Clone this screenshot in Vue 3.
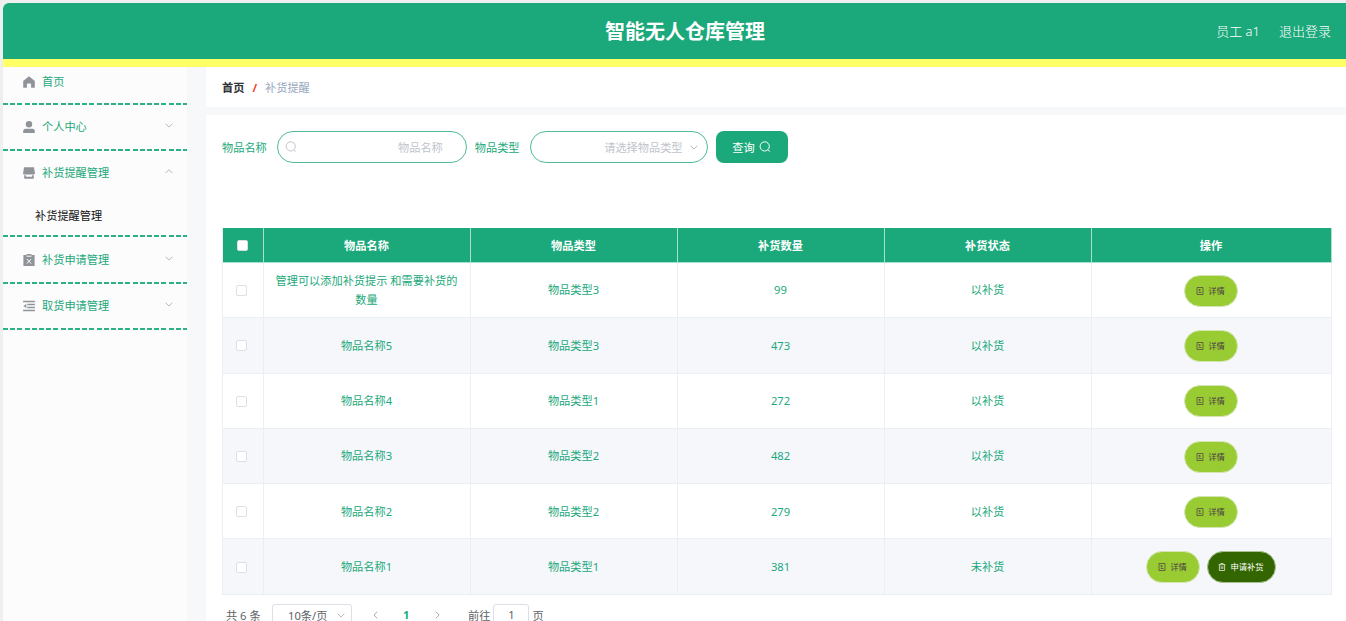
<script setup>
const menus = [
  { label: '首页', icon: 'home', first: true },
  { label: '个人中心', icon: 'user', arrow: 'down' },
  { label: '补货提醒管理', icon: 'shop', arrow: 'up', child: '补货提醒管理' },
  { label: '补货申请管理', icon: 'clip', arrow: 'down' },
  { label: '取货申请管理', icon: 'list', arrow: 'down' },
]
const heads = ['物品名称', '物品类型', '补货数量', '补货状态', '操作']
const rows = [
  { name: '管理可以添加补货提示 和需要补货的数量', type: '物品类型3', count: 99, state: '以补货' },
  { name: '物品名称5', type: '物品类型3', count: 473, state: '以补货' },
  { name: '物品名称4', type: '物品类型1', count: 272, state: '以补货' },
  { name: '物品名称3', type: '物品类型2', count: 482, state: '以补货' },
  { name: '物品名称2', type: '物品类型2', count: 279, state: '以补货' },
  { name: '物品名称1', type: '物品类型1', count: 381, state: '未补货', apply: true },
]
</script>

<template>
  <div class="page">
    <header class="header">
      <h1 class="title">智能无人仓库管理</h1>
      <div class="account"><span>员工 a1</span><span>退出登录</span></div>
    </header>
    <div class="body">
      <aside class="sidebar">
        <div v-for="m in menus" :key="m.label" class="group" :class="{ first: m.first }">
          <div class="item">
            <svg class="icon" viewBox="0 0 12 12">
              <path v-if="m.icon === 'home'" d="M6 .3 11.800 5v6.200q0 .6-.6.6H8.100V8.200q0-.7-.7-.7H4.600q-.7 0-.7.7v3.600H.8q-.6 0-.6-.6V5z" />
              <template v-else-if="m.icon === 'user'">
                <circle cx="6" cy="3.300" r="3.200" />
                <path d="M.2 12v-1.800Q.2 7.800 2.700 7.800h6.600q2.500 0 2.500 2.400V12z" />
              </template>
              <template v-else-if="m.icon === 'shop'">
                <path d="M1 .2h10l.9 6q0 1.300-1.500 1.300H1.600Q.1 7.500.1 6.200z" />
                <path d="M1.200 8.200h1.700v1.500h6.200V8.200h1.700v2.700q0 .9-.9.9H2.100q-.9 0-.9-.9z" />
              </template>
              <template v-else-if="m.icon === 'clip'">
                <path d="M.4 1.100h3.200V0h4.800v1.100h3.200V12H.4z" />
                <path class="cut" d="M3.500 2.200h5M3.900 5l4.200 4.600M8.100 5 3.900 9.600" />
              </template>
              <template v-else>
                <path class="bars" d="M.1 1.500h11.800M4.300 4.500h7.600M4.300 7.500h7.600M.1 10.500h11.800" />
                <path d="M.3 6 3.300 3.900v4.200z" />
              </template>
            </svg>
            <span>{{ m.label }}</span>
            <svg v-if="m.arrow" class="arrow" viewBox="0 0 8 5">
              <path :d="m.arrow === 'down' ? 'M.6.700 4 4.100 7.400.7' : 'M.6 4.100 4 .700 7.400 4.100'" />
            </svg>
          </div>
          <div v-if="m.child" class="child">{{ m.child }}</div>
        </div>
      </aside>
      <main class="main">
        <nav class="crumbs"><b>首页</b><b class="slash">/</b><span>补货提醒</span></nav>
        <section class="content">
          <div class="search">
            <label>物品名称</label>
            <div class="field name-field">
              <svg class="glass" viewBox="0 0 12 12"><circle cx="5.700" cy="5.400" r="4.600" /><path d="m8.900 8.700 2 2" /></svg>
              <span>物品名称</span>
            </div>
            <label>物品类型</label>
            <div class="field type-field">
              <span>请选择物品类型</span>
              <svg class="arrow" viewBox="0 0 8 5"><path d="M.6.700 4 4.100 7.400.7" /></svg>
            </div>
            <button class="query"><span>查询</span><svg class="glass" viewBox="0 0 12 12"><circle cx="5.700" cy="5.400" r="4.600" /><path d="m8.900 8.700 2 2" /></svg></button>
          </div>
          <table class="table">
            <colgroup><col class="c-check" /><col class="c-data" /><col class="c-data" /><col class="c-data" /><col class="c-data" /><col /></colgroup>
            <thead>
              <tr><th><i class="check"></i></th><th v-for="h in heads" :key="h">{{ h }}</th></tr>
            </thead>
            <tbody>
              <tr v-for="r in rows" :key="r.name">
                <td><i class="check"></i></td>
                <td>{{ r.name }}</td>
                <td>{{ r.type }}</td>
                <td>{{ r.count }}</td>
                <td>{{ r.state }}</td>
                <td>
                  <div class="ops">
                    <button class="btn">
                      <svg viewBox="0 0 8 8"><path d="M1 .5h6v7H1zM2.600 2.500h1.500v1.300H2.600M2.600 5.500h3" /></svg>详情
                    </button>
                    <button v-if="r.apply" class="btn dark">
                      <svg viewBox="0 0 8 8"><path d="M.6 1.700h6.800M2.800 1.500V.5h2.400v1M1.400 1.700v5.800h5.200V1.700M3.200 3.200V6M4.800 3.200V6" /></svg>申请补货
                    </button>
                  </div>
                </td>
              </tr>
            </tbody>
          </table>
          <div class="pager">
            <span class="total">共 6 条</span>
            <div class="size"><span>10条/页</span><svg class="arrow" viewBox="0 0 8 5"><path d="M.6.700 4 4.100 7.400.7" /></svg></div>
            <svg class="step" viewBox="0 0 5 8"><path d="M4.200.7.9 4l3.300 3.300" /></svg>
            <b class="current">1</b>
            <svg class="step" viewBox="0 0 5 8"><path d="M.8.700 4.100 4 .8 7.300" /></svg>
            <span class="goto">前往</span>
            <div class="jump">1</div>
            <span>页</span>
          </div>
        </section>
      </main>
    </div>
  </div>
</template>

<style>
body { margin: 0; overflow: hidden; background: #eeefef; }
</style>
<style scoped>
* { box-sizing: border-box; }
.page {
  height: 621px; padding: 3px 0 0 3px; overflow: hidden;
  font: 11.2px/18px "Noto Sans", "Noto Sans CJK SC", sans-serif; color: #1ba87a;
}
.header {
  height: 64px; display: grid; grid-template-columns: 1fr auto 1fr; align-items: center;
  background: #1ba87a; border-bottom: 8px solid #ff6; border-radius: 6px 0 0 0; color: #fff;
}
.title { grid-column: 2; margin: 2px 0 0 21px; font-size: 20px; line-height: 30px; font-weight: 700; }
.account { display: flex; justify-content: flex-end; gap: 19px; padding-right: 15px; font-size: 13px; font-weight: 300; }
.body { display: flex; height: 554px; background: #f7f8fa; }
.sidebar { width: 184px; margin-right: 19px; background: #fcfcfc; }
.group {
  padding-bottom: 2px;
  background: repeating-linear-gradient(90deg, #2eb087 0 5px, transparent 5px 7.200px) left bottom / 100% 2px no-repeat;
}
.item { height: 44.200px; display: flex; align-items: center; padding: 0 14px 0 20px; }
.item span { padding-top: 1px; }
.first .item { height: 35.500px; padding-bottom: 7px; }
.icon { width: 12px; height: 12px; margin: 1px 7px 0 0; fill: #909399; }
.cut { fill: none; stroke: #fcfcfc; stroke-width: 1; }
.bars { fill: none; stroke: #909399; stroke-width: 1.400; }
.arrow { width: 8px; height: 5px; margin-left: auto; fill: none; stroke: #b4b8c0; stroke-width: 1; }
.item .arrow { margin-top: -2px; }
.child { height: 40.500px; padding-left: 32px; line-height: 42px; color: #111; }
.main { flex: 1; min-width: 0; }
.crumbs { display: flex; align-items: center; height: 40px; margin-bottom: 8px; padding: 1px 0 0 16px; background: #fff; border-radius: 0 0 0 3px; color: #97a8be; }
.crumbs b { color: #303133; }
.crumbs .slash { margin: 0 8px; color: #f5402c; }
.content { height: 506px; padding: 16px 14px 0 16px; background: #fff; }
.search { display: flex; align-items: center; height: 32px; margin-bottom: 65px; }
.search label, .search span { padding-top: 1px; }
.field { display: flex; align-items: center; height: 32px; border: 1px solid #4fbc97; border-radius: 16px; color: #c0c4cc; }
.name-field { width: 190px; margin: 0 8px 0 10px; padding: 0 23px 0 7px; justify-content: space-between; }
.type-field { width: 178px; margin: 0 8px 0 10px; padding: 0 9px; justify-content: flex-end; }
.type-field .arrow { margin-left: 7px; }
.glass { width: 12px; height: 12px; fill: none; stroke: currentColor; stroke-width: 1; }
button { border: 0; font: inherit; }
.query { display: flex; align-items: center; justify-content: center; gap: 4px; width: 72px; height: 32px; padding: 0; background: #1ba87a; border-radius: 8px; color: #fff; }
.table { width: 1110px; table-layout: fixed; border-collapse: separate; border-spacing: 0; border-left: 1px solid #ebeef5; text-align: center; }
.c-check { width: 41px; }
.c-data { width: 207px; }
th { height: 35px; padding: 1px 1px 0 0; background: #1ba87a; border-right: 1px solid #a9dfcd; border-bottom: 1px solid #a9dfcd; color: #fff; }
td { height: 55.300px; padding: 1px 9px 0 8px; border-right: 1px solid #ebeef5; border-bottom: 1px solid #ebeef5; line-height: 18.600px; }
tbody tr:nth-child(even) { background: #f5f7fa; }
.check { display: block; width: 11px; height: 11px; margin: 0 auto; border: 1px solid #dcdfe6; border-radius: 2px; background: #fff; }
td .check { margin-left: 5px; }
.ops { display: flex; justify-content: center; gap: 7px; margin-left: -1px; }
.btn { display: flex; align-items: center; justify-content: center; gap: 4px; width: 54px; height: 32px; padding: 0; background: #9c3; border: 1px solid #d5e6b4; border-radius: 16px; color: #4c3b45; font-size: 8.300px; line-height: 12px; }
.btn svg { width: 8px; height: 8px; fill: none; stroke: currentColor; stroke-width: .7; }
.dark { width: 69px; background: #360; border-color: #a9c08f; color: #fff; }
.pager { display: flex; align-items: center; height: 23px; margin-top: 9px; color: #606266; }
.pager > span { padding-top: 1px; }
.total { margin-left: 4px; width: 46px; }
.size { display: flex; align-items: center; width: 80px; height: 23px; padding: 1px 6px 0 15px; border: 1px solid #dcdfe6; border-radius: 3px; }
.step { width: 5px; height: 8px; margin-left: 21px; fill: none; stroke: #a4a8b0; stroke-width: 1; }
.current { margin-left: 25px; width: 7px; color: #1ba87a; }
.current + .step { margin-left: 25px; }
.goto { margin-left: 28px; }
.jump { width: 36px; height: 23px; margin: 0 3px; border: 1px solid #dcdfe6; border-radius: 3px; text-align: center; line-height: 20px; }
</style>
